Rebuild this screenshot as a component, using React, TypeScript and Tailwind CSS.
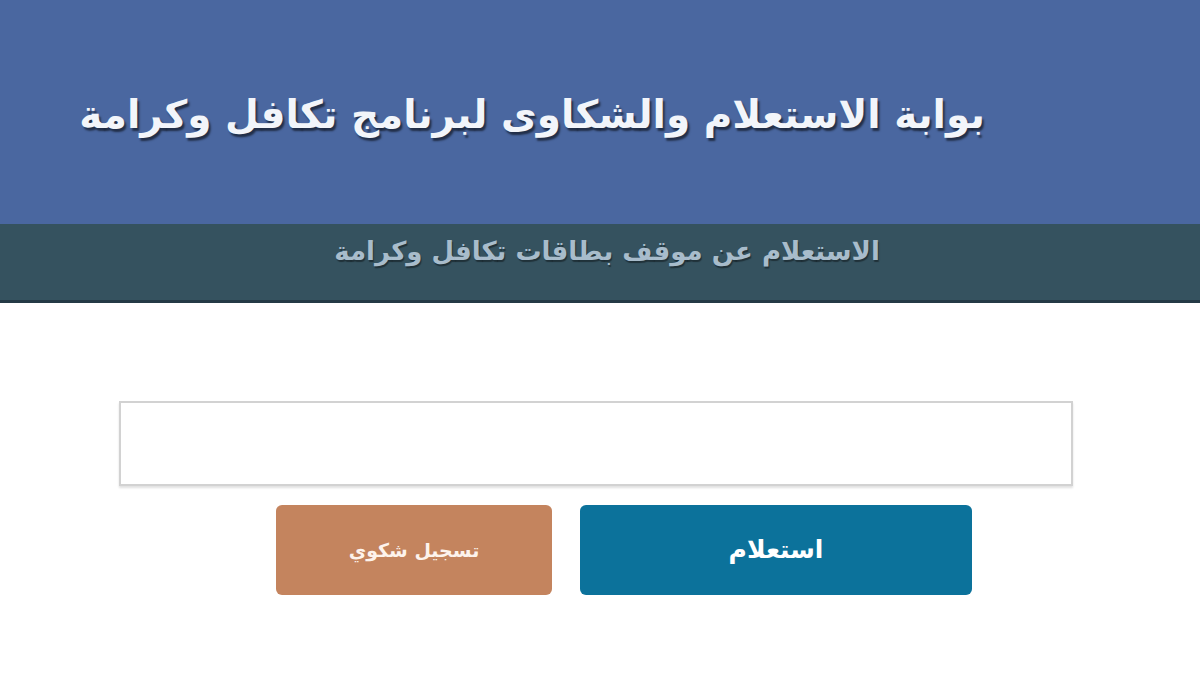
export default function App() {
  return (
    <div
      dir="rtl"
      className="min-h-[699px] w-full bg-white"
      style={{ fontFamily: '"DejaVu Sans", "Noto Sans", sans-serif' }}
    >
      {/* Header */}
      <div className="flex h-[224px] items-center bg-[#4a67a0] pr-[215px] pt-[4px]">
        <h1 className="text-[39px] font-bold leading-none text-[#f2f5fa] [text-shadow:2px_3px_2px_rgba(0,0,0,0.55)]">
          بوابة الاستعلام والشكاوى لبرنامج تكافل وكرامة
        </h1>
      </div>

      {/* Sub header */}
      <div className="flex h-[79px] items-center justify-center border-b-[3px] border-[#243a46] bg-[#35525f] pb-[22px] pl-[14px]">
        <h2 className="text-[26px] font-bold leading-none text-[#a8bccb] [text-shadow:1px_2px_1px_rgba(0,0,0,0.4)]">
          الاستعلام عن موقف بطاقات تكافل وكرامة
        </h2>
      </div>

      {/* Form */}
      <div className="flex flex-col items-center pt-[98px]">
        <input
          type="text"
          className="mr-[8px] h-[85px] w-[954px] border-2 border-[#d2d2d2] bg-white shadow-[0_2px_2px_rgba(0,0,0,0.12)] outline-none"
        />
        <div className="mt-[19px] flex gap-[28px] pl-[48px]">
          <button className="flex h-[90px] w-[392px] items-center justify-center rounded-[6px] bg-[#0c729b] text-[25px] font-bold text-white">
            استعلام
          </button>
          <button className="flex h-[90px] w-[276px] items-center justify-center rounded-[6px] bg-[#c4845e] text-[19px] font-bold text-[#fdf3ec]">
            تسجيل شكوي
          </button>
        </div>
      </div>
    </div>
  );
}
